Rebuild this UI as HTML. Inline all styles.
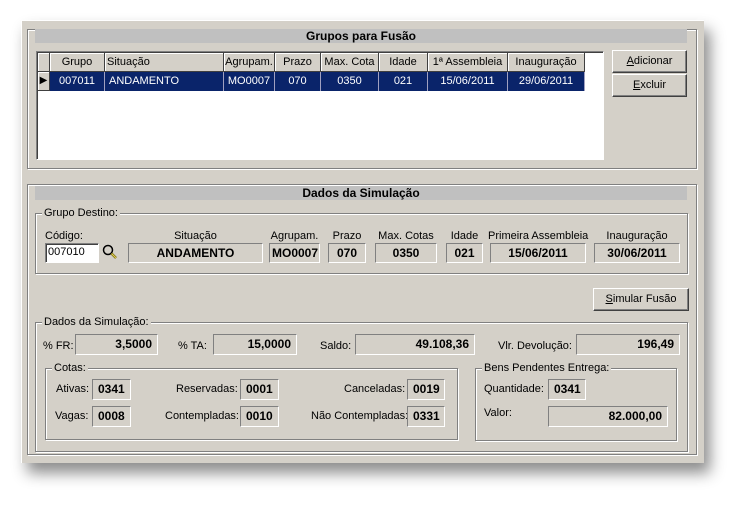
<!DOCTYPE html>
<html><head><meta charset="utf-8"><style>
*{margin:0;padding:0;box-sizing:border-box}
body{width:745px;height:505px;background:#fff;position:relative;overflow:hidden;font-family:"Liberation Sans",Arial,sans-serif;font-size:11px;color:#000}
.a{position:absolute}
.win{left:21px;top:20px;width:683px;height:443px;background:#d4d0c8;box-shadow:6px 10px 14px rgba(0,0,0,.45);border-left:1px solid #fff;border-top:1px solid #fff}
.et{position:absolute;border:1px solid #808080;box-shadow:inset 1px 1px 0 #fff,1px 1px 0 #fff}
.title{position:absolute;background:#c0c0c0;font-weight:bold;font-size:12px;text-align:center;line-height:14px;height:14px}
.lg{position:absolute;background:#d4d0c8;padding:0 2px;line-height:12px}
.f{position:absolute;border-top:1px solid #808080;border-left:1px solid #808080;border-bottom:1px solid #fff;border-right:1px solid #fff;font-weight:bold;font-size:12px;line-height:18px;padding:0 5px;white-space:nowrap;overflow:hidden}
.r{text-align:right}.c{text-align:center}
.l{position:absolute;line-height:12px;white-space:nowrap}
.btn{position:absolute;background:#d4d0c8;border:1px solid;border-color:#fff #404040 #404040 #fff;box-shadow:inset -1px -1px 0 #808080;text-align:center;line-height:20px}
.grid{left:36px;top:51px;width:568px;height:109px;background:#fff;border:1px solid;border-color:#808080 #fff #fff #808080;box-shadow:inset 1px 1px 0 #404040}
.h{position:absolute;top:1px;height:19px;background:#d4d0c8;border-right:1px solid #404040;border-bottom:1px solid #404040;box-shadow:inset 1px 1px 0 #fff;line-height:18px;text-align:center}
.d{position:absolute;top:20px;height:19px;background:#0a246a;color:#fff;border-right:1px solid #a0a0c0;line-height:18px;text-align:center}
</style></head><body>
<div class="a win"></div>
<!-- panel 1 -->
<div class="et" style="left:27px;top:29px;width:670px;height:140px"></div>
<div class="title" style="left:35px;top:29px;width:652px">Grupos para Fusão</div>
<div class="a grid">
<div class="h" style="left:1px;width:12px"></div>
<div class="h" style="left:13px;width:55px">Grupo</div>
<div class="h" style="left:68px;width:119px;text-align:left;padding-left:2px">Situação</div>
<div class="h" style="left:187px;width:51px">Agrupam.</div>
<div class="h" style="left:238px;width:46px">Prazo</div>
<div class="h" style="left:284px;width:58px">Max. Cota</div>
<div class="h" style="left:342px;width:49px">Idade</div>
<div class="h" style="left:391px;width:80px">1ª Assembleia</div>
<div class="h" style="left:471px;width:77px">Inauguração</div>
<div class="h" style="left:1px;top:20px;width:12px;font-size:10px;line-height:18px">&#9654;</div>
<div class="d" style="left:13px;width:55px">007011</div>
<div class="d" style="left:68px;width:119px;text-align:left;padding-left:4px">ANDAMENTO</div>
<div class="d" style="left:187px;width:51px">MO0007</div>
<div class="d" style="left:238px;width:46px">070</div>
<div class="d" style="left:284px;width:58px">0350</div>
<div class="d" style="left:342px;width:49px">021</div>
<div class="d" style="left:391px;width:80px">15/06/2011</div>
<div class="d" style="left:471px;width:77px">29/06/2011</div>
</div>
<div class="btn" style="left:612px;top:50px;width:75px;height:23px"><u>A</u>dicionar</div>
<div class="btn" style="left:612px;top:74px;width:75px;height:23px"><u>E</u>xcluir</div>
<!-- panel 2 -->
<div class="et" style="left:27px;top:184px;width:670px;height:271px"></div>
<div class="title" style="left:35px;top:186px;width:652px">Dados da Simulação</div>
<div class="et" style="left:35px;top:213px;width:653px;height:61px"></div>
<div class="lg" style="left:42px;top:207px">Grupo Destino:</div>
<div class="l" style="left:45px;top:230px">Código:</div>
<div class="a" style="left:45px;top:243px;width:54px;height:20px;background:#fff;border:1px solid;border-color:#808080 #fff #fff #808080;box-shadow:inset 1px 1px 0 #404040;line-height:17px;padding-left:2px">007010</div>
<svg class="a" style="left:102px;top:244px" width="16" height="16" viewBox="0 0 16 16"><circle cx="6" cy="6" r="4.5" fill="none" stroke="#000" stroke-width="1.5"/><path d="M9.5 9.5 L14 14" stroke="#7a6a00" stroke-width="2.5"/><path d="M9.5 9.5 L14 14" stroke="#e0d060" stroke-width="1"/></svg>
<div class="l c" style="left:128px;top:230px;width:135px">Situação</div>
<div class="f c" style="left:128px;top:243px;width:135px;height:20px">ANDAMENTO</div>
<div class="l c" style="left:269px;top:230px;width:51px">Agrupam.</div>
<div class="f" style="left:269px;top:243px;width:51px;height:20px;padding:0 2px">MO0007</div>
<div class="l c" style="left:328px;top:230px;width:38px">Prazo</div>
<div class="f c" style="left:328px;top:243px;width:38px;height:20px">070</div>
<div class="l c" style="left:375px;top:230px;width:62px">Max. Cotas</div>
<div class="f c" style="left:375px;top:243px;width:62px;height:20px">0350</div>
<div class="l c" style="left:446px;top:230px;width:37px">Idade</div>
<div class="f c" style="left:446px;top:243px;width:37px;height:20px">021</div>
<div class="l c" style="left:488px;top:230px;width:100px">Primeira Assembleia</div>
<div class="f c" style="left:490px;top:243px;width:96px;height:20px">15/06/2011</div>
<div class="l c" style="left:594px;top:230px;width:86px">Inauguração</div>
<div class="f c" style="left:594px;top:243px;width:86px;height:20px">30/06/2011</div>
<div class="btn" style="left:593px;top:288px;width:96px;height:23px"><u>S</u>imular Fusão</div>
<div class="et" style="left:35px;top:322px;width:653px;height:130px"></div>
<div class="lg" style="left:42px;top:316px">Dados da Simulação:</div>
<div class="l" style="left:43px;top:340px">% FR:</div>
<div class="f r" style="left:75px;top:334px;width:83px;height:21px">3,5000</div>
<div class="l" style="left:178px;top:340px">% TA:</div>
<div class="f r" style="left:213px;top:334px;width:84px;height:21px">15,0000</div>
<div class="l" style="left:320px;top:340px">Saldo:</div>
<div class="f r" style="left:355px;top:334px;width:120px;height:21px">49.108,36</div>
<div class="l" style="left:498px;top:340px">Vlr. Devolução:</div>
<div class="f r" style="left:576px;top:334px;width:104px;height:21px">196,49</div>
<div class="et" style="left:45px;top:368px;width:413px;height:72px"></div>
<div class="lg" style="left:52px;top:362px">Cotas:</div>
<div class="l" style="left:56px;top:383px">Ativas:</div>
<div class="f" style="left:92px;top:379px;width:39px;height:21px">0341</div>
<div class="l" style="left:55px;top:410px">Vagas:</div>
<div class="f" style="left:92px;top:406px;width:39px;height:21px">0008</div>
<div class="l" style="left:176px;top:383px">Reservadas:</div>
<div class="f" style="left:240px;top:379px;width:39px;height:21px">0001</div>
<div class="l" style="left:165px;top:410px">Contempladas:</div>
<div class="f" style="left:240px;top:406px;width:39px;height:21px">0010</div>
<div class="l" style="left:344px;top:383px">Canceladas:</div>
<div class="f" style="left:407px;top:379px;width:38px;height:21px">0019</div>
<div class="l" style="left:311px;top:410px">Não Contempladas:</div>
<div class="f" style="left:407px;top:406px;width:38px;height:21px">0331</div>
<div class="et" style="left:475px;top:368px;width:202px;height:73px"></div>
<div class="lg" style="left:482px;top:362px">Bens Pendentes Entrega:</div>
<div class="l" style="left:484px;top:383px">Quantidade:</div>
<div class="f" style="left:548px;top:379px;width:38px;height:21px">0341</div>
<div class="l" style="left:484px;top:407px">Valor:</div>
<div class="f r" style="left:548px;top:406px;width:120px;height:21px">82.000,00</div>
</body></html>
